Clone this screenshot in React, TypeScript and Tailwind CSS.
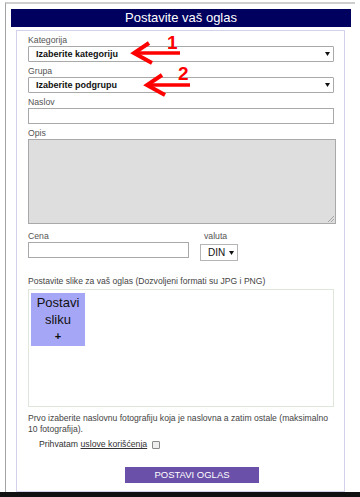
import React from 'react';

const Label: React.FC<{ text: string; className?: string }> = ({ text, className = '' }) => (
    <div className={`h-[10px] leading-[10px] text-[8.7px] text-[#555] ${className}`}>{text}</div>
);

const Caret: React.FC = () => (
    <svg width="5" height="4" viewBox="0 0 5 4" className="shrink-0">
        <path d="M0 0 L5 0 L2.5 4 Z" fill="#111" />
    </svg>
);

const FakeSelect: React.FC<{ text: string; className?: string }> = ({ text, className = '' }) => (
    <div className={`mt-[1px] h-[16px] border border-[#a9a9a9] rounded-[1px] bg-white flex items-center pl-[7px] pr-[3px] ${className}`}>
        <span className="flex-1 text-[9px] font-bold text-[#111] leading-none">{text}</span>
        <Caret />
    </div>
);

const Arrow: React.FC<{ left: number; top: number; len: number }> = ({ left, top, len }) => (
    <svg width={len + 4} height="28" viewBox={`0 0 ${len + 4} 28`} className="absolute" style={{ left, top }}>
        <line x1="6" y1="13" x2={len} y2="13" stroke="#ff0000" strokeWidth="3.5" />
        <polyline points="20,3 5,13 23,23" fill="none" stroke="#ff0000" strokeWidth="4" strokeLinejoin="miter" />
    </svg>
);

export default function App() {
    return (
        <div className="relative w-[360px] h-[497px] bg-white overflow-hidden flex flex-col font-['Liberation_Sans',Arial,sans-serif]">
            <div className="pt-[2px] flex-1 flex flex-col">
                <div className="ml-[5px] w-[350px] flex-1 border-t-2 border-l border-t-[#cfcfcf] border-l-[#a3a3a3] flex flex-col">
                    <div className="mt-[5px] ml-[5px] w-[340px] h-[18px] bg-[#00005e] text-white text-[13px] leading-[18px] text-center">
                        Postavite vaš oglas
                    </div>
                    <div className="mt-[3px] ml-[10px] w-[329px] h-[462px] border border-[#d4d2ea] pt-[4px] pl-[11px] pr-[10px] flex flex-col">
                        <Label text="Kategorija" />
                        <FakeSelect text="Izaberite kategoriju" />
                        <Label text="Grupa" className="mt-[4px]" />
                        <FakeSelect text="Izaberite podgrupu" />
                        <Label text="Naslov" className="mt-[4px]" />
                        <div className="mt-[1px] h-[16px] border border-[#a9a9a9] bg-white" />
                        <Label text="Opis" className="mt-[4px]" />
                        <div className="relative mt-[1px] h-[85px] w-[308px] border border-[#a9a9a9] bg-[#dedede]">
                            <svg width="6" height="6" viewBox="0 0 6 6" className="absolute right-[1px] bottom-[1px]">
                                <path d="M6 0 L0 6 M6 3 L3 6" stroke="#999" strokeWidth="0.8" />
                            </svg>
                        </div>
                        <div className="mt-[7px] flex">
                            <div className="w-[161px]">
                                <Label text="Cena" />
                                <div className="mt-[1px] h-[16px] border border-[#a9a9a9] bg-white" />
                            </div>
                            <div className="ml-[11px]">
                                <Label text="valuta" className="pl-[4px] text-[#333]" />
                                <div className="mt-[3px] h-[17px] w-[38px] border border-[#b5b5b5] bg-white flex items-center pl-[7px] pr-[3px]">
                                    <span className="flex-1 text-[10px] text-[#111] leading-none">DIN</span>
                                    <Caret />
                                </div>
                            </div>
                        </div>
                        <div className="mt-[15px] h-[10px] leading-[10px] text-[8.6px] text-[#444] whitespace-nowrap">
                            Postavite slike za vaš oglas (Dozvoljeni formati su JPG i PNG)
                        </div>
                        <div className="mt-[3px] h-[118px] border border-[#dfe7dc] pt-[3px] pl-[2px]">
                            <div className="w-[54px] h-[53px] bg-[#a6a6f6] text-[#111] text-[13px] leading-[16.5px] text-center pt-[2px]">
                                Postavi
                                <br />
                                sliku
                                <br />
                                <span className="font-bold text-[11px]">+</span>
                            </div>
                        </div>
                        <div className="mt-[6px] text-[8.6px] leading-[10.5px] text-[#444]">
                            Prvo izaberite naslovnu fotografiju koja je naslovna a zatim ostale (maksimalno 10 fotografija).
                        </div>
                        <div className="mt-[6px] pl-[11px] h-[10px] flex items-center text-[8.7px] text-[#333]">
                            <span>Prihvatam&nbsp;</span>
                            <span className="underline">uslove korišćenja</span>
                            <span className="ml-[5px] w-[8px] h-[8px] border border-[#8a8a8a] bg-[#eeeeee] rounded-[1px]" />
                        </div>
                        <div className="mt-[17px] ml-[97px] w-[134px] h-[16px] bg-[#6a50a8] text-white text-[9.5px] leading-[16px] text-center">
                            POSTAVI OGLAS
                        </div>
                    </div>
                </div>
            </div>
            <div className="h-[5px] bg-[#111]" />

            <Arrow left={129} top={40} len={51} />
            <span className="absolute left-[167px] top-[33px] text-[19px] leading-none font-bold text-[#ff0000]">1</span>
            <Arrow left={142} top={72} len={48} />
            <span className="absolute left-[178px] top-[64px] text-[19px] leading-none font-bold text-[#ff0000]">2</span>
        </div>
    );
}
